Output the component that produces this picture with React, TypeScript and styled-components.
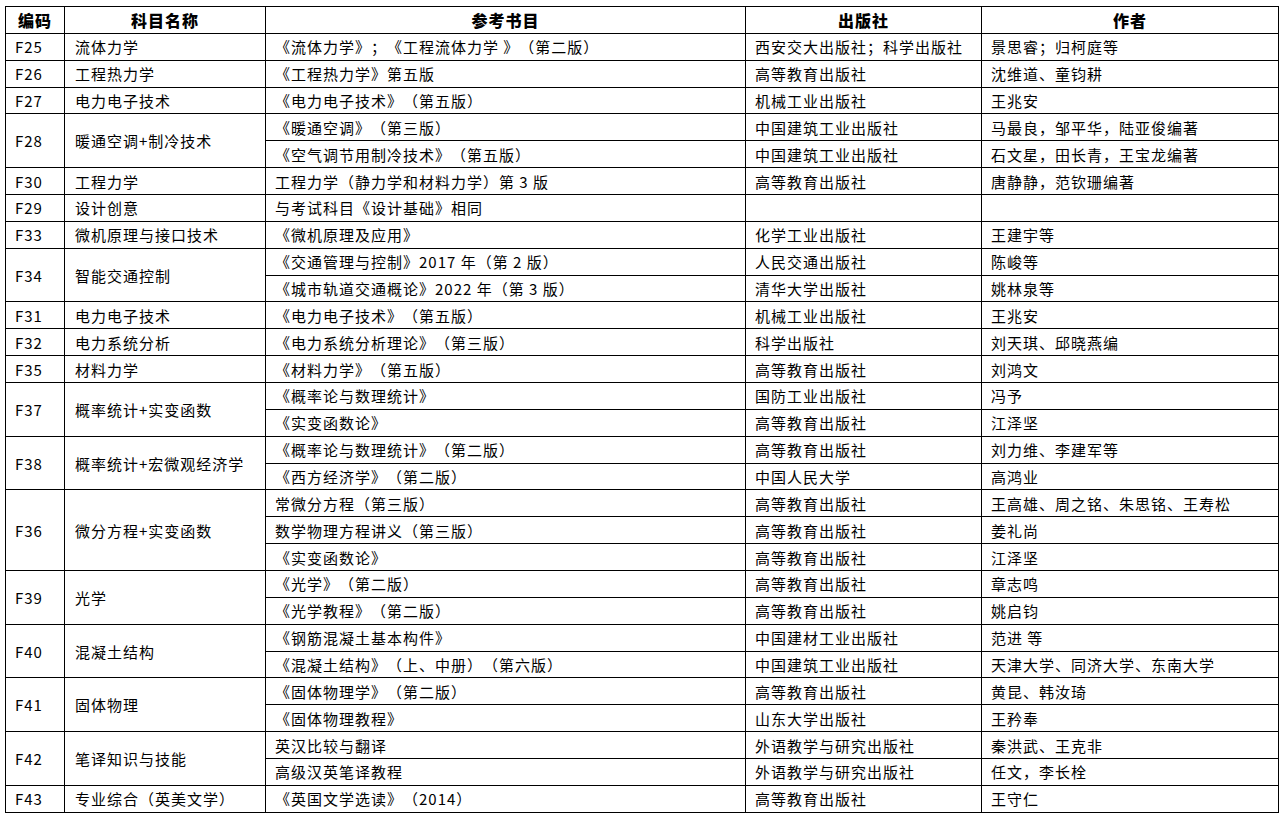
import React from "react";
import styled, { createGlobalStyle } from "styled-components";

const GlobalStyle = createGlobalStyle`
  html, body {
    margin: 0;
    padding: 0;
    background: #ffffff;
  }
  body {
    font-family: "Noto Sans CJK SC", "Liberation Sans", sans-serif;
    color: #000;
  }
`;

const Page = styled.div`
  padding: 6px 0 0 5px;
`;

const Table = styled.table`
  border-collapse: collapse;
  table-layout: fixed;
  width: 1273px;
  font-size: 15px;
  letter-spacing: 1px;
  line-height: 1;
  text-spacing-trim: space-all;
`;

const Col = styled.col<{ $w: number }>`
  width: ${(p) => p.$w}px;
`;

const HeadCell = styled.th`
  box-sizing: border-box;
  height: 26.86px;
  padding: 0;
  border: 1px solid #000;
  font-weight: 900;
  text-align: center;
  vertical-align: middle;
  font-size: 16px;
`;

const Cell = styled.td<{ $pad?: number }>`
  box-sizing: border-box;
  height: 26.86px;
  padding: 0 0 0 ${(p) => p.$pad ?? 9}px;
  border: 1px solid #000;
  text-align: left;
  vertical-align: middle;
  white-space: nowrap;
  overflow: hidden;
`;

type Book = { title: string; pub: string; author: string };
type Group = { code: string; subject: string; books: Book[] };

const b = (title: string, pub: string, author: string): Book => ({ title, pub, author });

const groups: Group[] = [
  { code: "F25", subject: "流体力学", books: [b("《流体力学》；《工程流体力学 》（第二版）", "西安交大出版社；科学出版社", "景思睿；归柯庭等")] },
  { code: "F26", subject: "工程热力学", books: [b("《工程热力学》第五版", "高等教育出版社", "沈维道、童钧耕")] },
  { code: "F27", subject: "电力电子技术", books: [b("《电力电子技术》（第五版）", "机械工业出版社", "王兆安")] },
  {
    code: "F28",
    subject: "暖通空调+制冷技术",
    books: [
      b("《暖通空调》（第三版）", "中国建筑工业出版社", "马最良，邹平华，陆亚俊编著"),
      b("《空气调节用制冷技术》（第五版）", "中国建筑工业出版社", "石文星，田长青，王宝龙编著"),
    ],
  },
  { code: "F30", subject: "工程力学", books: [b("工程力学（静力学和材料力学）第 3 版", "高等教育出版社", "唐静静，范钦珊编著")] },
  { code: "F29", subject: "设计创意", books: [b("与考试科目《设计基础》相同", "", "")] },
  { code: "F33", subject: "微机原理与接口技术", books: [b("《微机原理及应用》", "化学工业出版社", "王建宇等")] },
  {
    code: "F34",
    subject: "智能交通控制",
    books: [
      b("《交通管理与控制》2017 年（第 2 版）", "人民交通出版社", "陈峻等"),
      b("《城市轨道交通概论》2022 年（第 3 版）", "清华大学出版社", "姚林泉等"),
    ],
  },
  { code: "F31", subject: "电力电子技术", books: [b("《电力电子技术》（第五版）", "机械工业出版社", "王兆安")] },
  { code: "F32", subject: "电力系统分析", books: [b("《电力系统分析理论》（第三版）", "科学出版社", "刘天琪、邱晓燕编")] },
  { code: "F35", subject: "材料力学", books: [b("《材料力学》（第五版）", "高等教育出版社", "刘鸿文")] },
  {
    code: "F37",
    subject: "概率统计+实变函数",
    books: [
      b("《概率论与数理统计》", "国防工业出版社", "冯予"),
      b("《实变函数论》", "高等教育出版社", "江泽坚"),
    ],
  },
  {
    code: "F38",
    subject: "概率统计+宏微观经济学",
    books: [
      b("《概率论与数理统计》（第二版）", "高等教育出版社", "刘力维、李建军等"),
      b("《西方经济学》（第二版）", "中国人民大学", "高鸿业"),
    ],
  },
  {
    code: "F36",
    subject: "微分方程+实变函数",
    books: [
      b("常微分方程（第三版）", "高等教育出版社", "王高雄、周之铭、朱思铭、王寿松"),
      b("数学物理方程讲义（第三版）", "高等教育出版社", "姜礼尚"),
      b("《实变函数论》", "高等教育出版社", "江泽坚"),
    ],
  },
  {
    code: "F39",
    subject: "光学",
    books: [
      b("《光学》（第二版）", "高等教育出版社", "章志鸣"),
      b("《光学教程》（第二版）", "高等教育出版社", "姚启钧"),
    ],
  },
  {
    code: "F40",
    subject: "混凝土结构",
    books: [
      b("《钢筋混凝土基本构件》", "中国建材工业出版社", "范进 等"),
      b("《混凝土结构》（上、中册）（第六版）", "中国建筑工业出版社", "天津大学、同济大学、东南大学"),
    ],
  },
  {
    code: "F41",
    subject: "固体物理",
    books: [
      b("《固体物理学》（第二版）", "高等教育出版社", "黄昆、韩汝琦"),
      b("《固体物理教程》", "山东大学出版社", "王矜奉"),
    ],
  },
  {
    code: "F42",
    subject: "笔译知识与技能",
    books: [
      b("英汉比较与翻译", "外语教学与研究出版社", "秦洪武、王克非"),
      b("高级汉英笔译教程", "外语教学与研究出版社", "任文，李长栓"),
    ],
  },
  { code: "F43", subject: "专业综合（英美文学）", books: [b("《英国文学选读》（2014）", "高等教育出版社", "王守仁")] },
];

export default function App() {
  return (
    <Page>
      <GlobalStyle />
      <Table>
        <colgroup>
          <Col $w={59} />
          <Col $w={201} />
          <Col $w={480} />
          <Col $w={236} />
          <Col $w={297} />
        </colgroup>
        <thead>
          <tr>
            <HeadCell>编码</HeadCell>
            <HeadCell>科目名称</HeadCell>
            <HeadCell>参考书目</HeadCell>
            <HeadCell>出版社</HeadCell>
            <HeadCell>作者</HeadCell>
          </tr>
        </thead>
        <tbody>
          {groups.map((g) =>
            g.books.map((book, i) => (
              <tr key={g.code + i}>
                {i === 0 && (
                  <>
                    <Cell rowSpan={g.books.length}>{g.code}</Cell>
                    <Cell rowSpan={g.books.length} $pad={10}>{g.subject}</Cell>
                  </>
                )}
                <Cell>{book.title}</Cell>
                <Cell>{book.pub}</Cell>
                <Cell>{book.author}</Cell>
              </tr>
            ))
          )}
        </tbody>
      </Table>
    </Page>
  );
}
